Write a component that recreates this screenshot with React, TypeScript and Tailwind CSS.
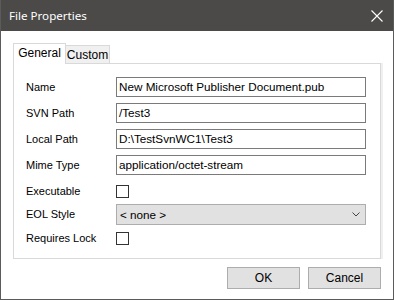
import React from "react";

const fields = [
  { label: "Name", value: "New Microsoft Publisher Document.pub" },
  { label: "SVN Path", value: "/Test3" },
  { label: "Local Path", value: "D:\\TestSvnWC1\\Test3" },
  { label: "Mime Type", value: "application/octet-stream" },
];

const Checkbox: React.FC = () => (
  <div className="w-[13px] h-[13px] border border-[#333333] bg-white" />
);

const App: React.FC = () => {
  return (
    <div
      className="w-[394px] h-[300px] bg-white border border-[#5b5b5b] border-t-0 flex flex-col text-[11px] text-black"
      style={{ fontFamily: '"Liberation Sans", Arial, sans-serif' }}
    >
      {/* title bar */}
      <div className="h-[31px] bg-[#4b4a48] flex items-center justify-between pl-[8px] pr-[10px] shrink-0">
        <span className="text-white text-[11.6px]" style={{ fontFamily: '"Noto Sans", sans-serif' }}>
          File Properties
        </span>
        <svg width="12" height="12" viewBox="0 0 12 12" className="mt-[1px]">
          <path d="M0.5 0.5 L11.5 11.5 M11.5 0.5 L0.5 11.5" stroke="#ffffff" strokeWidth="1.1" />
        </svg>
      </div>

      <div className="pl-[12px] pt-[12px]">
        {/* tabs */}
        <div className="flex items-end h-[20px]">
          <div className="w-[53px] bg-white border border-b-0 border-[#d9d9d9] relative z-10 mb-[-1px] h-[21px] flex items-center justify-center pb-[2px] text-[12px]">
            General
          </div>
          <div className="w-[44px] h-[18px] bg-[#f0f0f0] border border-l-0 border-b-0 border-[#d9d9d9] flex items-center justify-center text-[12px]">
            Custom
          </div>
        </div>

        {/* page */}
        <div className="w-[368px] h-[196px] bg-white border border-[#d9d9d9] shadow-[2px_0_0_#f0f0f0] pl-[12px] pt-[13px]">
          <div className="flex flex-col gap-[6px]">
            {fields.map((f) => (
              <div key={f.label} className="flex items-center h-[20px]">
                <span className="w-[90px]">{f.label}</span>
                <div className="w-[250px] h-[20px] border border-[#7a7a7a] flex items-center pl-[2px] text-[11.7px]">
                  {f.value}
                </div>
              </div>
            ))}
          </div>
          <div className="flex items-center h-[20px] mt-[6px]">
            <span className="w-[90px]">Executable</span>
            <Checkbox />
          </div>
          <div className="flex items-center h-[21px] mt-[3px]">
            <span className="w-[90px]">EOL Style</span>
            <div className="w-[250px] h-[21px] bg-[#e1e1e1] border border-[#adadad] flex items-center justify-between pl-[3px] pr-[5px] text-[11.7px]">
              <span>&lt; none &gt;</span>
              <svg width="8" height="5" viewBox="0 0 8 5">
                <path d="M0.5 0.5 L4 4 L7.5 0.5" stroke="#444444" strokeWidth="1" fill="none" />
              </svg>
            </div>
          </div>
          <div className="flex items-center h-[20px] mt-[3px]">
            <span className="w-[90px]">Requires Lock</span>
            <Checkbox />
          </div>
        </div>

        {/* buttons */}
        <div className="flex justify-end gap-[8px] pr-[13px] mt-[8px] w-[381px]">
          <button className="w-[73px] h-[22px] bg-[#e1e1e1] border border-[#adadad] text-[12px]">OK</button>
          <button className="w-[73px] h-[22px] bg-[#e1e1e1] border border-[#adadad] text-[12px]">Cancel</button>
        </div>
      </div>
    </div>
  );
};

export default App;
